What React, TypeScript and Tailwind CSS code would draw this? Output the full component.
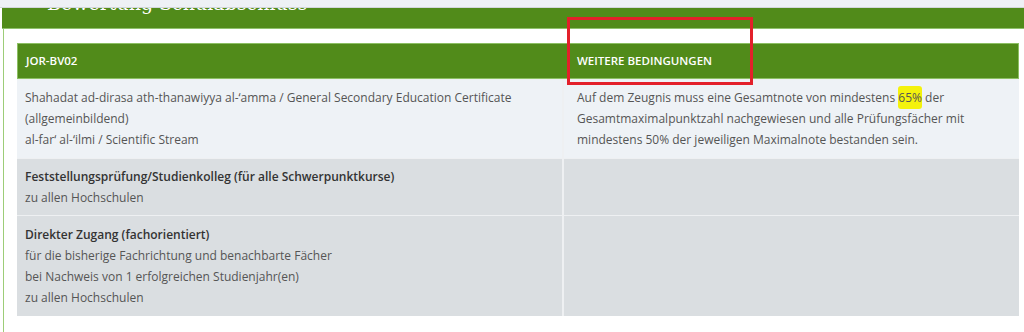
import React from 'react'

const font = { fontFamily: '"Open Sans", "Noto Sans", sans-serif' }

function Row({ left, right, light, pad }: { left: React.ReactNode; right?: React.ReactNode; light?: boolean; pad: string }) {
  return (
    <div className={`grid grid-cols-[545px_1fr] border-t border-[#eef0f2] ${light ? 'bg-[#eef2f6]' : 'bg-[#dadee1]'}`}>
      <div className={`px-2 leading-[21px] ${pad}`}>{left}</div>
      <div className={`border-l-2 border-[#eef0f2] pl-[13px] pr-2 leading-[21px] ${pad}`}>{right}</div>
    </div>
  )
}

export default function App() {
  return (
    <div className="relative w-[1024px] h-[332px] overflow-hidden bg-white" style={font}>
      <div className="h-[8px] bg-[#eef1f5] border-b border-[#d3d7db]" />

      <div className="ml-[2px] h-[21px] overflow-hidden bg-[#518b1a] border-b border-[#8fc16b]">
        <h2
          className="ml-[45px] mt-[-16px] text-[19px] leading-[22px] font-normal text-white"
          style={{ fontFamily: '"DejaVu Serif", "Liberation Serif", serif' }}
        >
          Bewertung Schulabschluss
        </h2>
      </div>

      <div className="ml-[3px] h-[303px] border-l border-[#9dcd78] pl-[13px] pr-[5px] pt-[14px]">
        <div className="text-[12px] text-[#555]">
          <div className="grid grid-cols-[545px_1fr] h-[36px] items-center bg-[#518b1a] border border-[#8cbf63] text-white font-semibold text-[11.5px]">
            <div className="px-2">JOR-BV02</div>
            <div className="pl-[14px]">WEITERE BEDINGUNGEN</div>
          </div>

          <Row
            light
            pad="pt-[7px] pb-[8px]"
            left={
              <>
                Shahadat ad-dirasa ath-thanawiyya al-‘amma / General Secondary Education Certificate
                <br />
                (allgemeinbildend)
                <br />
                al-far‘ al-‘ilmi / Scientific Stream
              </>
            }
            right={
              <>
                Auf dem Zeugnis muss eine Gesamtnote von mindestens{' '}
                <span className="bg-[#f4f20c] rounded-[3px] py-[3px]">65%</span> der
                <br />
                Gesamtmaximalpunktzahl nachgewiesen und alle Prüfungsfächer mit
                <br />
                mindestens 50% der jeweiligen Maximalnote bestanden sein.
              </>
            }
          />

          <Row
            pad="pt-[7px] pb-[7px]"
            left={
              <>
                <div className="font-semibold text-[#333]">Feststellungsprüfung/Studienkolleg (für alle Schwerpunktkurse)</div>
                <div>zu allen Hochschulen</div>
              </>
            }
          />

          <Row
            pad="pt-[8px] pb-[8px]"
            left={
              <>
                <div className="font-semibold text-[#333]">Direkter Zugang (fachorientiert)</div>
                <div>für die bisherige Fachrichtung und benachbarte Fächer</div>
                <div>bei Nachweis von 1 erfolgreichen Studienjahr(en)</div>
                <div>zu allen Hochschulen</div>
              </>
            }
          />
        </div>
      </div>

      <div className="absolute left-[567px] top-[17px] w-[186px] h-[68px] border-[3px] border-[#e3202a]" />
    </div>
  )
}
